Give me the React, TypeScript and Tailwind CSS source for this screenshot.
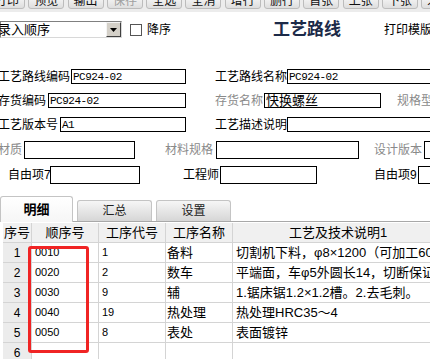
import React from "react";

const toolbar = ["打印", "预览", "输出", "保存", "全选", "全消", "增行", "删行", "首张", "上张", "下张", "末张"];

const rows = [
  { no: "1", seq: "0010", code: "1", name: "备料", desc: "切割机下料，φ8×1200（可加工60件" },
  { no: "2", seq: "0020", code: "2", name: "数车", desc: "平端面，车φ5外圆长14，切断保证长" },
  { no: "3", seq: "0030", code: "9", name: "辅", desc: "1.锯床锯1.2×1.2槽。2.去毛刺。" },
  { no: "4", seq: "0040", code: "19", name: "热处理", desc: "热处理HRC35～4" },
  { no: "5", seq: "0050", code: "8", name: "表处", desc: "表面镀锌" },
  { no: "6", seq: "", code: "", name: "", desc: "" },
];

function Label({ text, w, gray, ml }: { text: string; w: string; gray?: boolean; ml?: string }) {
  return (
    <div className={`${w} ${ml ?? ""} shrink-0 whitespace-nowrap text-[12px] leading-[14px] ${gray ? "text-[#8a8a8a]" : "text-black"}`}>
      {text}
    </div>
  );
}

function Box({ w, h = "h-[15px]", value, mono }: { w: string; h?: string; value?: string; mono?: boolean }) {
  return (
    <div className={`${w} ${h} shrink-0 border border-black bg-white flex items-center px-[1px] overflow-hidden whitespace-nowrap`}>
      {value && (
        <span className={mono ? "font-['Liberation_Mono',monospace] text-[11px] tracking-[-0.5px] leading-[12px]" : "text-[13px] leading-[14px]"}>
          {value}
        </span>
      )}
    </div>
  );
}

export default function App() {
  return (
    <div className="relative w-[430px] h-[359px] overflow-hidden bg-white font-['Liberation_Sans','Noto_Sans_CJK_SC',sans-serif] text-black">
      {/* toolbar, scrolled so only the bottom of the buttons shows */}
      <div className="h-[12px] bg-[#ececec] flex gap-[3.3px] -ml-[11px] overflow-visible">
        {toolbar.map((t) => (
          <div
            key={t}
            className={`w-[36px] h-[16px] -mt-[7px] shrink-0 rounded-[3px] border border-[#bcbcbc] bg-gradient-to-b from-[#fdfdfd] to-[#dedede] flex items-center justify-center text-[12px] leading-[12px] ${t === "保存" ? "text-[#a0a0a0]" : "text-[#111]"}`}
          >
            {t}
          </div>
        ))}
      </div>

      {/* select row */}
      <div className="mt-[9px] flex items-center h-[17px]">
        <div className="w-[122px] h-[17px] shrink-0 border border-[#808080] border-b-[#d8d8d8] border-r-[#d8d8d8] bg-white flex items-center">
          <span className="flex-1 -ml-[3px] text-[13px] leading-[14px] whitespace-nowrap">录入顺序</span>
          <div className="w-[15px] h-[15px] bg-[#d4d0c8] border border-[#f4f4f4] border-b-[#404040] border-r-[#404040] flex items-center justify-center">
            <svg width="7" height="4" viewBox="0 0 7 4">
              <path d="M0 0h7L3.5 4z" fill="#000" />
            </svg>
          </div>
        </div>
        <div className="ml-[8px] w-[12px] h-[12px] border border-[#555] bg-white shrink-0" />
        <span className="ml-[5px] text-[12px] leading-[14px] whitespace-nowrap">降序</span>
        <span className="ml-[102px] text-[17px] leading-[18px] font-bold text-[#1c2a48] whitespace-nowrap">工艺路线</span>
        <span className="ml-[43px] text-[12px] leading-[14px] whitespace-nowrap">打印模版</span>
      </div>

      {/* form */}
      <div className="mt-[31px] flex flex-col -ml-[2px]">
        <div className="flex items-center">
          <Label text="工艺路线编码" w="w-[73px]" />
          <Box w="w-[115px]" value="PC924-02" mono />
          <Label text="工艺路线名称" w="w-[72px]" ml="ml-[29px]" />
          <Box w="w-[160px]" value="PC924-02" mono />
        </div>
        <div className="flex items-center mt-[9px]">
          <Label text="存货编码" w="w-[50px]" />
          <Box w="w-[138px]" value="PC924-02" mono />
          <Label text="存货名称" w="w-[49px]" gray ml="ml-[29px]" />
          <Box w="w-[117px]" value="快换螺丝" />
          <Label text="规格型号" w="w-[60px]" gray ml="ml-[16px]" />
        </div>
        <div className="flex items-center mt-[9px]">
          <Label text="工艺版本号" w="w-[62px]" />
          <Box w="w-[126px]" value="A1" mono />
          <Label text="工艺描述说明" w="w-[72px]" ml="ml-[29px]" />
          <Box w="w-[160px]" />
        </div>
        <div className="flex items-center mt-[9px]">
          <Label text="材质" w="w-[26px]" gray />
          <Box w="w-[111px]" h="h-[18px]" />
          <Label text="材料规格" w="w-[51px]" gray ml="ml-[30px]" />
          <Box w="w-[143px]" h="h-[18px]" />
          <Label text="设计版本" w="w-[50px]" gray ml="ml-[15px]" />
          <Box w="w-[40px]" h="h-[18px]" />
        </div>
        <div className="flex items-center mt-[7px]">
          <Label text="自由项7" w="w-[42px]" ml="ml-[10px]" />
          <Box w="w-[90px]" h="h-[18px]" />
          <Label text="工程师" w="w-[37px]" ml="ml-[43px]" />
          <Box w="w-[97px]" h="h-[18px]" />
          <Label text="自由项9" w="w-[44px]" ml="ml-[57px]" />
          <Box w="w-[40px]" h="h-[18px]" />
        </div>
      </div>

      {/* tabs */}
      <div className="mt-[12px] h-[26px] flex items-end border-b border-[#a8a8a8]">
        <div className="w-[73px] h-[26px] -mb-px shrink-0 rounded-t-[3px] border border-b-0 border-[#c4c4c4] bg-gradient-to-b from-[#ffffff] to-[#f6f6f6] flex items-center justify-center text-[13px] font-bold leading-[14px]">
          明细
        </div>
        <div className="ml-[4px] w-[75px] h-[21px] shrink-0 rounded-t-[3px] border border-b-0 border-[#c4c4c4] bg-gradient-to-b from-[#f6f6f6] to-[#d6d6d6] flex items-center justify-center text-[12px] leading-[14px] text-[#222]">
          汇总
        </div>
        <div className="ml-[4px] w-[75px] h-[21px] shrink-0 rounded-t-[3px] border border-b-0 border-[#c4c4c4] bg-gradient-to-b from-[#f6f6f6] to-[#d6d6d6] flex items-center justify-center text-[12px] leading-[14px] text-[#222]">
          设置
        </div>
      </div>

      {/* grid */}
      <div className="mt-[1px] ml-[3px] w-[440px]">
        <div className="flex h-[20px] bg-[#f0f0f0] border-b border-[#d4d4d4] text-[13px] leading-[14px]">
          <div className="w-[29px] shrink-0 flex items-center justify-center border-r border-[#d4d4d4]">序号</div>
          <div className="w-[67px] shrink-0 flex items-center justify-center border-r border-[#d4d4d4]">顺序号</div>
          <div className="w-[67px] shrink-0 flex items-center justify-center border-r border-[#d4d4d4]">工序代号</div>
          <div className="w-[67px] shrink-0 flex items-center justify-center border-r border-[#d4d4d4]">工序名称</div>
          <div className="w-[210px] shrink-0 flex items-center justify-center whitespace-nowrap">工艺及技术说明1</div>
        </div>
        {rows.map((r) => (
          <div key={r.no} className="flex h-[20px] border-b border-[#d4d4d4]">
            <div className="w-[29px] shrink-0 bg-[#ececec] flex items-center justify-center border-r border-[#d4d4d4] text-[12px]">
              {r.no}
            </div>
            <div className="w-[67px] shrink-0 flex items-center pl-[3px] border-r border-[#d4d4d4] text-[11px]">{r.seq}</div>
            <div className="w-[67px] shrink-0 flex items-center pl-[3px] border-r border-[#d4d4d4] text-[11px]">{r.code}</div>
            <div className="w-[67px] shrink-0 flex items-center pl-[1px] border-r border-[#d4d4d4] text-[13px] leading-[14px]">{r.name}</div>
            <div className="w-[210px] shrink-0 flex items-center pl-[3px] whitespace-nowrap overflow-hidden text-[13px] leading-[14px]">
              {r.desc}
            </div>
          </div>
        ))}
      </div>

      {/* red annotation */}
      <div className="absolute left-[28px] top-[246px] w-[61px] h-[107px] border-[3px] border-[#f02424] rounded-[3px]" />
    </div>
  );
}
